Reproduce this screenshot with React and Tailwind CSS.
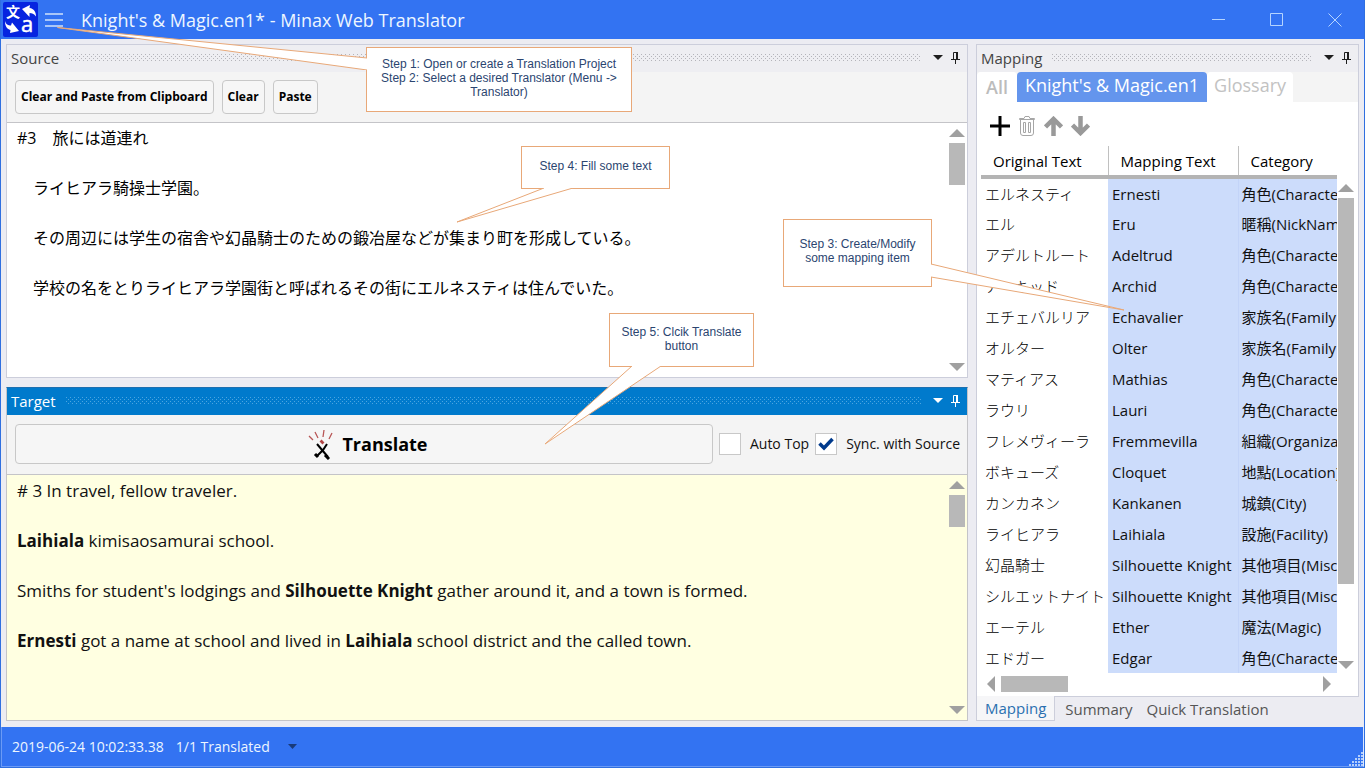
import React from "react";

const MAPPINGS = [
  ["エルネスティ", "Ernesti", "角色(Character)"],
  ["エル", "Eru", "暱稱(NickName)"],
  ["アデルトルート", "Adeltrud", "角色(Character)"],
  ["アーキッド", "Archid", "角色(Character)"],
  ["エチェバルリア", "Echavalier", "家族名(Family Name)"],
  ["オルター", "Olter", "家族名(Family Name)"],
  ["マティアス", "Mathias", "角色(Character)"],
  ["ラウリ", "Lauri", "角色(Character)"],
  ["フレメヴィーラ", "Fremmevilla", "組織(Organization)"],
  ["ボキューズ", "Cloquet", "地點(Location)"],
  ["カンカネン", "Kankanen", "城鎮(City)"],
  ["ライヒアラ", "Laihiala", "設施(Facility)"],
  ["幻晶騎士", "Silhouette Knight", "其他項目(Misc)"],
  ["シルエットナイト", "Silhouette Knight", "其他項目(Misc)"],
  ["エーテル", "Ether", "魔法(Magic)"],
  ["エドガー", "Edgar", "角色(Character)"],
];

const SOURCE_TEXT = `#3　旅には道連れ

　ライヒアラ騎操士学園。

　その周辺には学生の宿舎や幻晶騎士のための鍛冶屋などが集まり町を形成している。

　学校の名をとりライヒアラ学園街と呼ばれるその街にエルネスティは住んでいた。`;

const TRIANGLES = {
  up: "M0 8 8 0 16 8Z",
  down: "M0 0H16L8 8Z",
  left: "M8 0V16L0 8Z",
  right: "M0 0V16L8 8Z",
};

function Triangle({ dir }) {
  const wide = dir === "up" || dir === "down";
  return (
    <svg width={wide ? 16 : 8} height={wide ? 8 : 16} className="block fill-[#a0a0a0]" aria-hidden="true">
      <path d={TRIANGLES[dir]} />
    </svg>
  );
}

function VerticalScroll({ label, thumb, className }) {
  return (
    <div className={`flex w-4 shrink-0 flex-col ${className}`}>
      <button aria-label={`${label}: scroll up`}><Triangle dir="up" /></button>
      <div className="mt-1.5 flex-1"><div className={`bg-[#b8b8b8] ${thumb}`} /></div>
      <button aria-label={`${label}: scroll down`}><Triangle dir="down" /></button>
    </div>
  );
}

function Grip({ id, color }) {
  return (
    <svg className="h-2 min-w-0 flex-1" aria-hidden="true">
      <defs>
        <pattern id={id} width="4" height="4" patternUnits="userSpaceOnUse">
          <rect width="1" height="1" fill={color} />
          <rect x="2" y="2" width="1" height="1" fill={color} />
        </pattern>
      </defs>
      <rect width="100%" height="7" fill={`url(#${id})`} />
    </svg>
  );
}

function PanelHeader({ title, active }) {
  return (
    <div className={`flex h-[27px] shrink-0 items-center pr-[7px] pb-0.5 pl-1 ${active ? "bg-[#007acc] text-white" : "bg-[#eeeef2] text-[#444]"}`}>
      <h2 className="mr-2.5 text-[15px] leading-5">{title}</h2>
      <Grip id={`grip-${title}`} color={active ? "#4ba5e0" : "#b4b4ba"} />
      <button aria-label={`${title} window options`} className="ml-3">
        <svg width="10" height="6" className={`block ${active ? "fill-white" : "fill-[#1e1e1e]"}`}><path d="M0 0H10L5 5Z" /></svg>
      </button>
      <button aria-label={`Pin ${title}`} className="ml-2">
        <svg width="9" height="12" fill="none" stroke="currentColor" className={`block ${active ? "text-white" : "text-[#1e1e1e]"}`}>
          <path d="M2.500 7V.5H6.500V7M0 7.500H9M4.500 8V12" />
          <path d="M6 0V7" strokeWidth="2" />
        </svg>
      </button>
    </div>
  );
}

function Callout({ box, tail, size, points, children }) {
  return (
    <div className={`pointer-events-none absolute z-10 flex justify-center border border-[#e8a878] bg-white text-center font-['Liberation_Sans',sans-serif] text-xs leading-[14px] text-[#2b4570] ${box}`}>
      <p>{children}</p>
      <svg width={size[0]} height={size[1]} className={`absolute ${tail}`} aria-hidden="true">
        <polyline points={points} fill="#fff" stroke="#e8a878" />
      </svg>
    </div>
  );
}

function Logo() {
  return (
    <svg width="35" height="35" viewBox="0 0 35 35" className="block shrink-0" aria-hidden="true">
      <rect width="35" height="35" rx="2" fill="#0624e0" />
      <text x="3" y="15" fontSize="14" fontWeight="700" fill="#fff" fontFamily="Noto Sans CJK TC, sans-serif">文</text>
      <text x="18" y="30" fontSize="22" fill="#fff" stroke="#fff" strokeWidth=".5" fontFamily="Open Sans, sans-serif">a</text>
      <path d="M19 7 27 3 26.500 6C31 6.500 33 10 33 14.500 31 11.500 29 11 26.500 11V15Z" fill="#fff" />
      <path d="M2 19C3 22.500 5 23.500 8 23.500L9 20.500 16 29 7 31 7.500 28C3.500 27 2 23.500 2 19Z" fill="#fff" />
    </svg>
  );
}

function Wand() {
  return (
    <svg width="26" height="32" viewBox="0 0 26 32" className="block" fill="none" aria-hidden="true">
      <path d="M1 8 5 12M7 4 10 10M16 2 15 9M24 5 21 11" stroke="#b85656" strokeWidth="1.300" />
      <path d="M13 15 15 13" stroke="#b34444" strokeWidth="4" />
      <path d="M9 16 20 29M19 16 15 22 9 28" stroke="#000" strokeWidth="2" />
      <path d="M7 26 10 29M17 27 21 31" stroke="#000" strokeWidth="3" />
    </svg>
  );
}

function TitleBar() {
  return (
    <header className="flex h-[39px] shrink-0 items-center bg-[#3373f2] pr-[22px] pl-0.5 text-white">
      <Logo />
      <button aria-label="Menu" className="ml-[7px]">
        <svg width="18" height="14" className="block" stroke="#a9c6f8" strokeWidth="2"><path d="M0 1H18M0 7H18M0 13H18" /></svg>
      </button>
      <h1 className="ml-[18px] flex-1 text-lg leading-6 text-[#edf6ff]">Knight's &amp; Magic.en1* - Minax Web Translator</h1>
      <div className="flex items-center gap-[45px]">
        <button aria-label="Minimize"><svg width="13" height="13" className="block" stroke="#b5d4ff"><path d="M0 6.500H13" /></svg></button>
        <button aria-label="Maximize"><svg width="13" height="13" className="block" fill="none" stroke="#b5d4ff"><path d="M.5 .5H12.500V12.500H.5Z" /></svg></button>
        <button aria-label="Close"><svg width="14" height="14" className="block" stroke="#b5d4ff"><path d="M.5 .5 13.500 13.500M13.500 .5 .5 13.500" /></svg></button>
      </div>
    </header>
  );
}

function ToolButton({ children }) {
  return (
    <button className="h-[34px] rounded border border-[#c8c8c8] bg-[#f6f6f6] px-[5px] text-xs font-bold text-black">{children}</button>
  );
}

function SourcePanel() {
  return (
    <section className="flex min-h-0 flex-1 flex-col border border-[#cccedb]">
      <PanelHeader title="Source" />
      <div className="flex h-[50px] shrink-0 items-center gap-2 bg-[#f4f4f4] px-2">
        <ToolButton>Clear and Paste from Clipboard</ToolButton>
        <ToolButton>Clear</ToolButton>
        <ToolButton>Paste</ToolButton>
      </div>
      <div className="flex min-h-0 flex-1 border-t border-[#c4c4c8] bg-white">
        <textarea
          aria-label="Source text"
          className="min-w-0 flex-1 resize-none overflow-hidden bg-white px-2.5 pt-[3px] text-base leading-[25px] text-black outline-none"
          defaultValue={SOURCE_TEXT}
        />
        <VerticalScroll label="Source" thumb="h-[42px]" className="mr-0.5 py-1.5" />
      </div>
    </section>
  );
}

function Check({ label, checked }) {
  return (
    <label className="flex items-center gap-[9px] text-sm whitespace-nowrap">
      <span className="grid size-[22px] place-items-center">
        <input type="checkbox" defaultChecked={checked} className="peer col-start-1 row-start-1 size-[22px] appearance-none border border-[#c8c8c8] bg-white" />
        <svg width="16" height="14" className="pointer-events-none relative col-start-1 row-start-1 hidden peer-checked:block" fill="none" stroke="#003a8c" strokeWidth="3.500" aria-hidden="true">
          <path d="M1.500 6.500 6 11 14.500 2" />
        </svg>
      </span>
      {label}
    </label>
  );
}

function TargetPanel() {
  return (
    <section className="flex min-h-0 flex-1 flex-col border border-[#c4c4c8] border-t-[#1c6fb0]">
      <PanelHeader title="Target" active />
      <div className="flex h-[59px] shrink-0 items-center gap-1.5 bg-[#f4f4f4] pr-[7px] pb-0.5 pl-2 text-[#111]">
        <button className="flex h-10 flex-1 items-center justify-center gap-2 rounded border border-[#c8c8c8] bg-[#f6f6f6] pl-2 text-lg font-bold text-black">
          <Wand />
          Translate
        </button>
        <Check label="Auto Top" />
        <Check label="Sync. with Source" checked />
      </div>
      <div className="flex min-h-0 flex-1 border-t border-[#c4c4c8] bg-[#ffffe1]">
        <div className="min-w-0 flex-1 space-y-[25px] overflow-hidden px-2.5 pt-[3px] text-[17px] leading-[25px] text-[#111]">
          <p># 3 In travel, fellow traveler.</p>
          <p><b>Laihiala</b> kimisaosamurai school.</p>
          <p>Smiths for student's lodgings and <b>Silhouette Knight</b> gather around it, and a town is formed.</p>
          <p><b>Ernesti</b> got a name at school and lived in <b>Laihiala</b> school district and the called town.</p>
        </div>
        <VerticalScroll label="Target" thumb="h-8" className="mr-0.5 py-1.5" />
      </div>
    </section>
  );
}

function MappingToolbar() {
  return (
    <div className="flex h-11 shrink-0 items-center gap-2 pt-1 pl-[9px]">
      <button aria-label="Add mapping"><svg width="20" height="20" className="block" stroke="#000" strokeWidth="3"><path d="M10 0V20M0 10H20" /></svg></button>
      <button aria-label="Delete mapping">
        <svg width="18" height="20" className="block" fill="none" stroke="#a6a6a6">
          <path d="M1.500 3.500V2.500H6L7 .5H11L12 2.500H16.500V3.500ZM2.500 4V17Q2.500 19.500 5 19.500H13Q15.500 19.500 15.500 17V4" />
          <path d="M5.500 6.500H7.500V16.500H5.500ZM10.500 6.500H12.500V16.500H10.500Z" />
        </svg>
      </button>
      <button aria-label="Move up"><svg width="19" height="20" className="block" fill="none" stroke="#999" strokeWidth="4.500"><path d="M9.500 20V4M1.500 11 9.500 3 17.500 11" /></svg></button>
      <button aria-label="Move down"><svg width="19" height="20" className="block" fill="none" stroke="#999" strokeWidth="4.500"><path d="M9.500 0V16M1.500 9 9.500 17 17.500 9" /></svg></button>
    </div>
  );
}

function MappingTable() {
  return (
    <div className="min-w-0 flex-1 overflow-hidden">
      <table className="w-[420px] table-fixed border-collapse text-left text-[15px] leading-5 whitespace-nowrap">
        <colgroup>
          <col className="w-[127px]" />
          <col className="w-[130px]" />
          <col />
        </colgroup>
        <thead>
          <tr className="h-[31px] border-b-4 border-[#b4b4b4] text-black">
            <th className="border-r border-[#c0c0c0] pl-3 font-medium">Original Text</th>
            <th className="border-r border-[#c0c0c0] pl-3 font-medium">Mapping Text</th>
            <th className="pl-3 font-medium">Category</th>
          </tr>
        </thead>
        <tbody>
          {MAPPINGS.map(([original, mapped, category]) => (
            <tr key={original} className="h-[31px] text-[#111]">
              <td className="overflow-hidden pl-1 font-light text-black">{original}</td>
              <td className="border-r border-[#c3d4f8] bg-[#ccdcfb] pl-1">{mapped}</td>
              <td className="bg-[#ccdcfb] pl-[3px]">{category}</td>
            </tr>
          ))}
        </tbody>
      </table>
    </div>
  );
}

function MappingPanel() {
  return (
    <aside className="flex w-[383px] shrink-0 flex-col">
      <section className="flex min-h-0 flex-1 flex-col border border-b-0 border-[#cccedb]">
        <PanelHeader title="Mapping" />
        <div className="flex h-[30px] shrink-0 bg-[#f4f4f4] text-lg leading-6">
          <button className="rounded-t bg-white px-[9px] font-semibold text-[#bcbcbc]">All</button>
          <button className="rounded-t bg-[#6495ed] px-2 pb-1 text-white">Knight's &amp; Magic.en1</button>
          <button className="rounded-t bg-white px-[7px] pb-1 text-[#c2c2c2]">Glossary</button>
        </div>
        <div className="flex min-h-0 flex-1 flex-col bg-white px-1">
          <MappingToolbar />
          <div className="flex min-h-0 flex-1">
            <MappingTable />
            <VerticalScroll label="Mapping" thumb="h-[386px]" className="ml-px pt-[38px] pb-1.5" />
          </div>
          <div className="mt-px flex h-5 shrink-0 items-start pr-[23px] pl-1.5">
            <button aria-label="Scroll left"><Triangle dir="left" /></button>
            <div className="ml-1.5 flex-1"><div className="h-4 w-[67px] bg-[#b8b8b8]" /></div>
            <button aria-label="Scroll right"><Triangle dir="right" /></button>
          </div>
        </div>
      </section>
      <nav className="flex h-[25px] shrink-0 text-[15px] leading-5 text-[#555]">
        <button className="border border-t-0 border-[#cccedb] bg-[#f6f6f8] px-2 text-[#2a70b0]">Mapping</button>
        <div className="flex flex-1 gap-3.5 border-t border-[#cccedb] pl-2.5">
          <button>Summary</button>
          <button>Quick Translation</button>
        </div>
      </nav>
    </aside>
  );
}

function StatusBar() {
  return (
    <footer className="flex h-10 shrink-0 items-center border-r border-b border-l border-[#6b9af6] border-r-[#dce8ff] bg-[#3373f2] pl-2.5 text-sm text-[#edf6ff]">
      <span>2019-06-24 10:02:33.38</span>
      <span className="ml-3">1/1 Translated</span>
      <button aria-label="Translation status list" className="ml-[18px]">
        <svg width="9" height="5" className="block fill-[#193a7a]"><path d="M0 0H9L4.500 5Z" /></svg>
      </button>
      <svg width="14" height="14" className="ml-auto self-end fill-[#b5cffa]" aria-hidden="true">
        <path d="M12 0h2v2h-2zM9 3h2v2h-2zM12 3h2v2h-2zM6 6h2v2h-2zM9 6h2v2h-2zM12 6h2v2h-2zM3 9h2v2h-2zM6 9h2v2h-2zM9 9h2v2h-2zM12 9h2v2h-2zM0 12h2v2h-2zM3 12h2v2h-2zM6 12h2v2h-2zM9 12h2v2h-2zM12 12h2v2h-2z" />
      </svg>
    </footer>
  );
}

export default function App() {
  return (
    <div className="relative flex h-screen flex-col overflow-hidden border-x border-b border-[#2f6fe0] bg-[#3373f2] font-['Open_Sans','Noto_Sans_CJK_JP',sans-serif]">
      <TitleBar />
      <main className="flex min-h-0 flex-1 gap-2 bg-[#ececf2] pt-[5px] pr-[5px] pb-1.5 pl-[5px]">
        <div className="flex min-w-0 flex-1 flex-col gap-[9px]">
          <SourcePanel />
          <TargetPanel />
        </div>
        <MappingPanel />
      </main>
      <StatusBar />

      <Callout box="left-[365px] top-[47px] h-[65px] w-[266px] pt-[9px] px-1" tail="right-[263px] -top-[21px]" size={[311, 43]} points="310,31 0.5,0.5 310,43">
        Step 1: Open or create a Translation Project<br />Step 2: Select a desired Translator (Menu -&gt; Translator)
      </Callout>
      <Callout box="left-[520px] top-[146px] h-[43px] w-[149px] pt-3" tail="-left-[66px] top-[41px]" size={[118, 35]} points="88,0 1,34 117,0">
        Step 4: Fill some text
      </Callout>
      <Callout box="left-[782px] top-[219px] h-[68px] w-[149px] px-3 pt-[17px]" tail="left-[147px] top-[43px]" size={[194, 48]} points="0,1 193,47 0,14">
        Step 3: Create/Modify some mapping item
      </Callout>
      <Callout box="left-[608px] top-[313px] h-[54px] w-[145px] px-2 pt-[11px]" tail="-left-[66px] top-[52px]" size={[118, 79]} points="88,0 1,78 117,0">
        Step 5: Clcik Translate button
      </Callout>
    </div>
  );
}
